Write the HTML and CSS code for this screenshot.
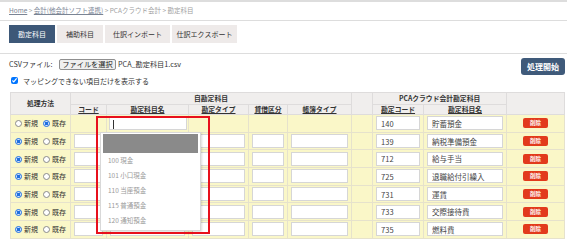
FILE: index.html
```html
<!DOCTYPE html>
<html lang="ja">
<head>
    <meta charset="UTF-8">
    <title>勘定科目</title>
    <link rel="stylesheet" href="styles.css">
</head>
<body>
<div class="page">
    <div class="breadcrumb"><a href="#">Home</a> &gt; <a href="#">会計(他会計ソフト連携)</a> &gt; PCAクラウド会計 &gt; 勘定科目</div>
    <div class="tabs">
        <span class="tab active">勘定科目</span>
        <span class="tab">補助科目</span>
        <span class="tab wide">仕訳インポート</span>
        <span class="tab wide">仕訳エクスポート</span>
    </div>
    <div class="toolbar">
        <div class="fileline"><span class="label">CSVファイル:</span><span class="filebtn">ファイルを選択</span><span>PCA_勘定科目1.csv</span></div>
        <button class="start">処理開始</button>
    </div>
    <label class="check"><input type="checkbox" checked>マッピングできない項目だけを表示する</label>

    <div class="tablewrap">
        <table class="grid">
            <colgroup>
                <col style="width:60px"><col style="width:36px"><col style="width:82px"><col style="width:60px"><col style="width:39px">
                <col style="width:64px"><col style="width:21px"><col style="width:51px"><col style="width:83px"><col style="width:58px">
            </colgroup>
            <tr class="head1">
                <th rowspan="2">処理方法</th>
                <th colspan="5">自勘定科目</th>
                <th rowspan="2"></th>
                <th colspan="2">PCAクラウド会計勘定科目</th>
                <th rowspan="2"></th>
            </tr>
            <tr class="head2">
                <th><u>コード</u></th>
                <th><u>勘定科目名</u></th>
                <th><u>勘定タイプ</u></th>
                <th><u>貸借区分</u></th>
                <th><u>帳簿タイプ</u></th>
                <th><u>勘定コード</u></th>
                <th><u>勘定科目名</u></th>
            </tr>
            <tr>
                <td class="way"><label><input type="radio" name="w1">新規</label><label><input type="radio" name="w1" checked>既存</label></td>
                <td></td>
                <td class="name"><input type="text" value=""><span class="caret"></span></td>
                <td></td><td></td><td></td><td></td>
                <td><input type="text" value="140"></td>
                <td><input type="text" value="貯蓄預金"></td>
                <td class="del"><button>削除</button></td>
            </tr>
            <tr>
                <td class="way"><label><input type="radio" name="w2" checked>新規</label><label><input type="radio" name="w2">既存</label></td>
                <td><input type="text"></td><td><input type="text"></td><td><input type="text"></td><td><input type="text"></td><td><input type="text"></td><td></td>
                <td><input type="text" value="139"></td>
                <td><input type="text" value="納税準備預金"></td>
                <td class="del"><button>削除</button></td>
            </tr>
            <tr>
                <td class="way"><label><input type="radio" name="w3" checked>新規</label><label><input type="radio" name="w3">既存</label></td>
                <td><input type="text"></td><td><input type="text"></td><td><input type="text"></td><td><input type="text"></td><td><input type="text"></td><td></td>
                <td><input type="text" value="712"></td>
                <td><input type="text" value="給与手当"></td>
                <td class="del"><button>削除</button></td>
            </tr>
            <tr>
                <td class="way"><label><input type="radio" name="w4" checked>新規</label><label><input type="radio" name="w4">既存</label></td>
                <td><input type="text"></td><td><input type="text"></td><td><input type="text"></td><td><input type="text"></td><td><input type="text"></td><td></td>
                <td><input type="text" value="725"></td>
                <td><input type="text" value="退職給付引繰入"></td>
                <td class="del"><button>削除</button></td>
            </tr>
            <tr>
                <td class="way"><label><input type="radio" name="w5" checked>新規</label><label><input type="radio" name="w5">既存</label></td>
                <td><input type="text"></td><td><input type="text"></td><td><input type="text"></td><td><input type="text"></td><td><input type="text"></td><td></td>
                <td><input type="text" value="731"></td>
                <td><input type="text" value="運賃"></td>
                <td class="del"><button>削除</button></td>
            </tr>
            <tr>
                <td class="way"><label><input type="radio" name="w6" checked>新規</label><label><input type="radio" name="w6">既存</label></td>
                <td><input type="text"></td><td><input type="text"></td><td><input type="text"></td><td><input type="text"></td><td><input type="text"></td><td></td>
                <td><input type="text" value="733"></td>
                <td><input type="text" value="交際接待費"></td>
                <td class="del"><button>削除</button></td>
            </tr>
            <tr>
                <td class="way"><label><input type="radio" name="w7" checked>新規</label><label><input type="radio" name="w7">既存</label></td>
                <td><input type="text"></td><td><input type="text"></td><td><input type="text"></td><td><input type="text"></td><td><input type="text"></td><td></td>
                <td><input type="text" value="735"></td>
                <td><input type="text" value="燃料費"></td>
                <td class="del"><button>削除</button></td>
            </tr>
        </table>

        <div class="suggest">
            <div class="picked"></div>
            <div class="item">100 現金</div>
            <div class="item">101 小口現金</div>
            <div class="item">110 当座預金</div>
            <div class="item">115 普通預金</div>
            <div class="item">120 通知預金</div>
        </div>
        <div class="mark"></div>
    </div>
</div>
</body>
</html>
```

FILE: styles.css
```css
body{
    margin: 0;
    font-family: "Noto Sans CJK JP", "Noto Sans", sans-serif;
    color: #333;
    background: #fff;
}
.page{
    border-top: 2px solid #dddddd;
}
.breadcrumb{
    height: 18px;
    line-height: 17px;
    padding-left: 9px;
    font-size: 6.5px;
    color: #a0a0a0;
    border-bottom: 1px solid #dddddd;
}
.breadcrumb a{
    color: #7a8494;
}
.tabs{
    display: flex;
    gap: 2px;
    padding: 4px 9px 10px;
    border-bottom: 1px solid #dddddd;
}
.tab{
    height: 18px;
    line-height: 18px;
    padding: 0 9px;
    font-size: 7px;
    background: #eeeae9;
    color: #333;
}
.tab.wide{
    width: 65px;
    padding: 0;
    text-align: center;
}
.tab.active{
    background: #3d5878;
    color: white;
}
.toolbar{
    display: flex;
    justify-content: space-between;
    align-items: flex-start;
    padding: 4px 2px 0 9px;
}
.fileline{
    display: flex;
    align-items: center;
    gap: 2px;
    margin-top: 1px;
    font-size: 7.2px;
    line-height: 11px;
    color: #333;
}
.fileline .label{
    width: 48px;
}
.filebtn{
    box-sizing: border-box;
    width: 57px;
    height: 11px;
    line-height: 9px;
    text-align: center;
    background: #efefef;
    border: 1px solid #8f8f8f;
    border-radius: 2px;
    color: #222;
}
.start{
    height: 17px;
    padding: 0 6px;
    border: 0;
    border-radius: 3px;
    background: #3f5a7a;
    color: white;
    font-family: inherit;
    font-size: 8px;
    font-weight: bold;
}
.check{
    display: flex;
    align-items: center;
    height: 11px;
    padding-left: 10px;
    font-size: 7px;
    color: #333;
}
.check input{
    width: 7px;
    height: 7px;
    margin: 0 5px 0 1px;
}
.tablewrap{
    position: relative;
    margin-top: 6px;
    padding-left: 10px;
}
.grid{
    border-collapse: collapse;
    table-layout: fixed;
    width: 554px;
}
.grid th{
    background: #f0eeed;
    border: 1px solid #dedcdc;
    font-size: 6.8px;
    font-weight: bold;
    color: #333;
    padding: 0;
    line-height: 9px;
}
.head1 th{
    height: 11px;
}
.head2 th{
    height: 9px;
}
.grid td{
    background: #faf7c8;
    border: 1px solid #e6e2cc;
    padding: 0 3px;
    height: 16.7px;
    font-size: 7px;
    line-height: 10px;
}
.grid td input[type=text]{
    display: block;
    box-sizing: border-box;
    width: 100%;
    height: 14px;
    margin: 0;
    padding: 0 4px;
    border: 1px solid #d6d6d6;
    background: #fff;
    font-family: inherit;
    font-size: 7.5px;
    color: #444;
    outline: 0;
}
.grid td.name{
    position: relative;
    padding-left: 2px;
    padding-right: 1px;
}
.caret{
    position: absolute;
    left: 6px;
    top: 5px;
    width: 1px;
    height: 9px;
    background: #333;
}
.way{
    white-space: nowrap;
}
.way label{
    margin-right: 4px;
}
.way input{
    appearance: none;
    width: 7px;
    height: 7px;
    margin: 0 2px 0 1px;
    border: 1px solid #8a8a8a;
    border-radius: 50%;
    background: #fff;
    vertical-align: -1px;
}
.way input:checked{
    border-color: #1f6fe0;
    background: radial-gradient(circle, #1f6fe0 45%, #cfe0fb 55%);
}
.del{
    text-align: center;
}
.del button{
    display: block;
    margin: 0 auto;
    width: 25px;
    height: 10px;
    padding: 0;
    border: 0;
    border-radius: 2px;
    background: #e23a1c;
    color: white;
    font-family: inherit;
    font-size: 5.5px;
    font-weight: bold;
    line-height: 10px;
}
.suggest{
    position: absolute;
    left: 100px;
    top: 40px;
    width: 101px;
    height: 99px;
    box-sizing: border-box;
    padding: 1px 2px;
    background: #fff;
    border: 1px solid #d8d8d8;
    box-shadow: 1px 1px 2px rgba(0,0,0,0.15);
}
.picked{
    height: 19px;
    background: #8a8a8a;
}
.item{
    height: 15px;
    line-height: 15px;
    padding-left: 5px;
    font-size: 6.5px;
    color: #9a9a9a;
}
.mark{
    position: absolute;
    left: 96px;
    top: 24px;
    width: 114px;
    height: 118px;
    box-sizing: border-box;
    border: 2px solid #e8101c;
}
```
